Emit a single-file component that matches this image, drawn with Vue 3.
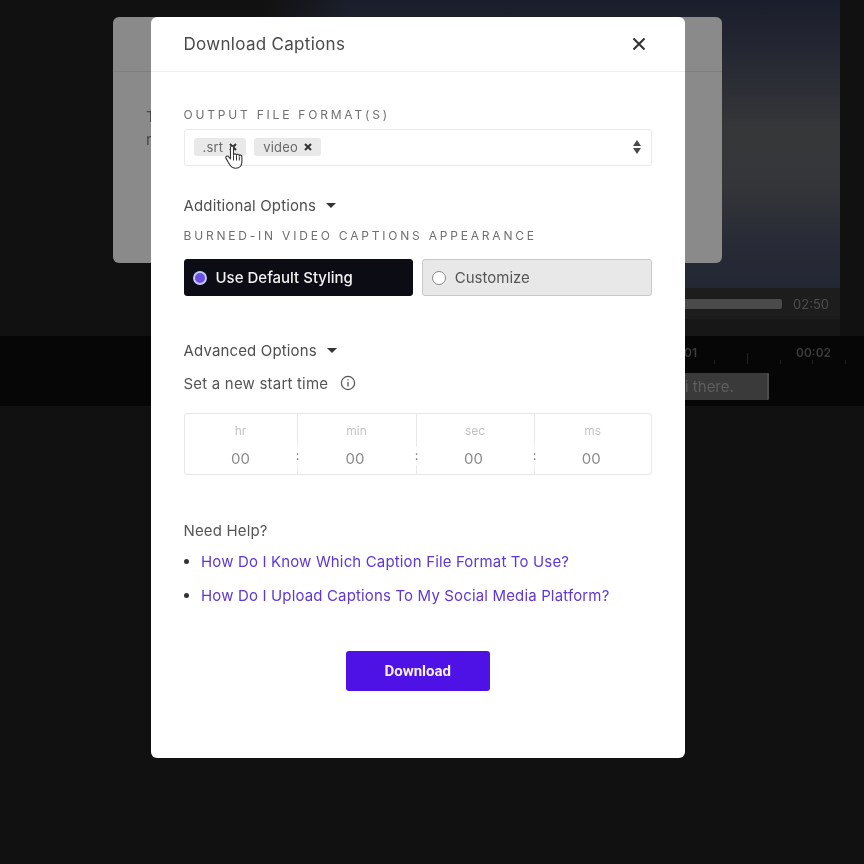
<script setup>
const formats = ['.srt', 'video']
const timeFields = [
  { label: 'hr', value: '00' },
  { label: 'min', value: '00' },
  { label: 'sec', value: '00' },
  { label: 'ms', value: '00' }
]
const helpLinks = [
  'How Do I Know Which Caption File Format To Use?',
  'How Do I Upload Captions To My Social Media Platform?'
]
const rulerTicks = [false, true, false, false, false]
</script>

<template>
  <div class="page">
    <div class="editor">
      <div class="video-row">
        <div class="video-area"></div>
      </div>
      <div class="player-row">
        <div class="progress"></div>
        <span class="duration">02:50</span>
      </div>
      <div class="timeline">
        <div class="ruler">
          <span class="tick-label first">01</span>
          <span class="tick-label second">00:02</span>
          <div class="ticks">
            <i v-for="(tall, i) in rulerTicks" :key="i" class="tick" :class="{ tall }"></i>
          </div>
        </div>
        <div class="caption-chip">i there.</div>
      </div>
    </div>

    <div class="back-modal">
      <div class="back-head"></div>
      <p class="back-text">T<br />r</p>
    </div>

    <section class="modal">
      <header class="modal-head">
        <h2>Download Captions</h2>
        <svg class="close" viewBox="0 0 14 14" width="14" height="14">
          <path d="M1.5 1.5l11 11M12.5 1.5l-11 11" stroke="#333" stroke-width="2.1" fill="none" />
        </svg>
      </header>

      <div class="modal-body">
        <label class="caps first-label">Output file format(s)</label>
        <div class="select">
          <span v-for="f in formats" :key="f" class="tag">
            {{ f }}
            <svg viewBox="0 0 8 8" width="8" height="8">
              <path d="M1 1l6 6M7 1l-6 6" stroke="#333" stroke-width="2" fill="none" />
            </svg>
          </span>
          <svg class="updown" viewBox="0 0 10 16" width="10" height="16">
            <path d="M5 1l4 6H1zM5 15l-4-6h8z" fill="#4a4a4a" />
          </svg>
          <svg class="cursor" viewBox="0 0 20 26" width="20" height="27">
            <path d="M6.5 3.2c0-2.3 3-2.3 3 0v7.3c.2-1.5 2.8-1.6 3 .2.3-1.3 2.6-1.2 2.8.5.4-1 2.5-.8 2.6.9v5.1c0 3.8-2.4 6.5-6 6.5-3.1 0-4.8-1.2-6.3-3.8l-3.6-6c-1-1.9 1.3-3.3 2.6-1.7l1.9 2.3z" fill="#fff" stroke="#333" stroke-width="1.1" stroke-linejoin="round" />
            <path d="M9.5 11v5M12.5 11v5M15.3 12v4" stroke="#333" stroke-width="1" fill="none" />
          </svg>
        </div>

        <div class="toggle first-toggle">Additional Options <i class="caret"></i></div>
        <label class="caps burn-label">Burned-in video captions appearance</label>
        <div class="style-row">
          <div class="style-btn active"><i class="radio on"></i>Use Default Styling</div>
          <div class="style-btn"><i class="radio"></i>Customize</div>
        </div>

        <div class="toggle second-toggle">Advanced Options <i class="caret"></i></div>
        <div class="start-time">
          Set a new start time
          <svg viewBox="0 0 16 16" width="16" height="16">
            <circle cx="8" cy="8" r="6.6" fill="none" stroke="#555" stroke-width="1.2" />
            <path d="M8 4.2v1.3M8 7v4.6" stroke="#555" stroke-width="1.3" fill="none" />
          </svg>
        </div>

        <div class="time-grid">
          <div v-for="(t, i) in timeFields" :key="t.label" class="time-cell">
            <span class="time-label">{{ t.label }}</span>
            <span class="time-value">{{ t.value }}</span>
            <span v-if="i < timeFields.length - 1" class="colon">:</span>
          </div>
        </div>

        <div class="help-title">Need Help?</div>
        <ul class="help-list">
          <li v-for="link in helpLinks" :key="link"><a>{{ link }}</a></li>
        </ul>

        <div class="actions">
          <button class="download">Download</button>
        </div>
      </div>
    </section>
  </div>
</template>

<style>
html, body {
  background: #111;
}
</style>

<style scoped>
.page {
  position: relative;
  width: 864px;
  height: 864px;
  overflow: hidden;
  background: #111;
  font-family: Inter, "Liberation Sans", sans-serif;
  filter: blur(0.4px);
}

.editor {
  display: flex;
  flex-direction: column;
}

.video-row {
  height: 288px;
  display: flex;
  justify-content: flex-end;
  padding-right: 24px;
}

.video-area {
  width: 580px;
  background:
    linear-gradient(to right, #111 0, rgba(17, 17, 17, 0) 90px),
    linear-gradient(#1a1d2b 0, #262833 20%, #363739 45%, #353639 62%, #282b36 85%, #232734 100%);
}

.player-row {
  height: 48px;
  box-sizing: border-box;
  margin-right: 24px;
  padding: 0 11px 16px 0;
  display: flex;
  justify-content: flex-end;
  align-items: center;
  gap: 11px;
  background:
    linear-gradient(to right, #111 300px, rgba(17, 17, 17, 0) 420px),
    linear-gradient(#1d1d1d 0, #1d1d1d 31px, #171717 31px);
}

.progress {
  width: 150px;
  height: 10px;
  border-radius: 2px;
  background: #4a4a4a;
}

.duration {
  font-size: 13px;
  color: #4d4d4d;
}

.timeline {
  height: 70px;
  background: #060606;
  display: flex;
  flex-direction: column;
  align-items: flex-end;
  padding-right: 95px;
}

.ruler {
  position: relative;
  align-self: stretch;
  height: 37px;
  font-size: 12px;
  font-weight: 600;
  color: #3c3c3c;
}

.tick-label {
  position: absolute;
  top: 9px;
}

.tick-label.first {
  left: 684px;
}

.tick-label.second {
  left: 796px;
}

.ticks {
  position: absolute;
  left: 714px;
  top: 16px;
  width: 132px;
  height: 12px;
  display: flex;
  justify-content: space-between;
  align-items: flex-end;
}

.tick {
  width: 1px;
  height: 4px;
  background: #222;
}

.tick.tall {
  height: 11px;
}

.caption-chip {
  width: 85px;
  height: 27px;
  box-sizing: border-box;
  background: #3a3a3a;
  border-right: 2px solid #4c4c4c;
  border-radius: 1px;
  color: #5e5e5e;
  font-size: 15px;
  line-height: 27px;
  text-indent: 1px;
}

.back-modal {
  position: absolute;
  left: 113px;
  top: 17px;
  width: 609px;
  height: 246px;
  border-radius: 6px;
  background: #8a8a8a;
}

.back-head {
  height: 54px;
  border-bottom: 1px solid #7f7f7f;
}

.back-text {
  margin: 33px 0 0 33px;
  font-size: 15px;
  line-height: 23px;
  color: #444;
}

.modal {
  position: absolute;
  left: 151px;
  top: 17px;
  width: 534px;
  height: 741px;
  border-radius: 6px;
  background: #fff;
}

.modal-head {
  height: 54px;
  display: flex;
  align-items: center;
  justify-content: space-between;
  padding: 0 39px 0 32.5px;
  border-bottom: 1px solid #eee;
}

.modal-head h2 {
  margin: 0;
  font-size: 17px;
  font-weight: 400;
  letter-spacing: 0.3px;
  color: #4a4a4a;
}

.modal-body {
  padding: 0 33px 0 32.5px;
}

.caps {
  display: block;
  font-size: 12px;
  line-height: 16px;
  letter-spacing: 2.8px;
  text-transform: uppercase;
  color: #707070;
}

.first-label {
  margin-top: 35px;
}

.select {
  position: relative;
  height: 37px;
  margin-top: 6px;
  display: flex;
  align-items: center;
  gap: 8px;
  padding-left: 9px;
  border: 1px solid #eaeaea;
  border-radius: 3px;
  box-sizing: border-box;
}

.tag {
  display: flex;
  align-items: center;
  gap: 6px;
  height: 18px;
  margin-top: -2px;
  padding: 0 9px;
  background: #e9e9e9;
  border-radius: 3px;
  font-size: 13px;
  letter-spacing: 0.2px;
  color: #6a6a6a;
}

.updown {
  position: absolute;
  right: 9px;
  top: 9px;
}

.cursor {
  position: absolute;
  left: 39px;
  top: 14px;
}

.toggle {
  display: flex;
  align-items: center;
  gap: 10px;
  font-size: 15px;
  line-height: 20px;
  letter-spacing: 0.15px;
  color: #4f4f4f;
}

.first-toggle {
  margin-top: 30px;
}

.second-toggle {
  margin-top: 45px;
}

.caret {
  width: 0;
  height: 0;
  margin-top: -1px;
  border-left: 5px solid transparent;
  border-right: 5px solid transparent;
  border-top: 5px solid #333;
}

.burn-label {
  margin-top: 12px;
}

.style-row {
  display: flex;
  gap: 9px;
  margin-top: 15px;
}

.style-btn {
  flex: 1;
  height: 37px;
  display: flex;
  align-items: center;
  gap: 9px;
  padding-left: 9px;
  box-sizing: border-box;
  border: 1px solid #c8c8c8;
  border-radius: 3px;
  background: #e8e8e8;
  font-size: 15px;
  color: #555;
}

.style-btn.active {
  padding-left: 8px;
  border-color: #0c0c14;
  background: #0c0c14;
  color: #f2f2f2;
  font-weight: 500;
}

.radio {
  width: 14px;
  height: 14px;
  box-sizing: border-box;
  border-radius: 50%;
  border: 1px solid #888;
  background: #fff;
}

.radio.on {
  border: 2.5px solid #c5c8fa;
  background: #6a4fe0;
}

.start-time {
  display: flex;
  align-items: center;
  gap: 12px;
  margin-top: 13px;
  font-size: 15px;
  line-height: 20px;
  letter-spacing: 0.2px;
  color: #555;
}

.start-time svg {
  margin-top: -3px;
}

.time-grid {
  display: grid;
  grid-template-columns: 113px 119px 118px 1fr;
  height: 62px;
  margin-top: 19px;
  box-sizing: border-box;
  border: 1px solid #e8e8e8;
  border-radius: 3px;
}

.time-cell {
  position: relative;
  display: flex;
  flex-direction: column;
  align-items: center;
  padding-top: 9px;
  box-sizing: border-box;
  border-right: 1px solid #e8e8e8;
}

.time-cell:last-child {
  border-right: 0;
}

.time-cell:not(:first-child) .time-value {
  margin-right: 3px;
}

.time-label {
  font-size: 12px;
  line-height: 16px;
  color: #c4c4c4;
}

.time-value {
  margin-top: 10px;
  font-size: 15px;
  line-height: 20px;
  color: #8a8a8a;
}

.colon {
  position: absolute;
  right: -3px;
  top: 33px;
  padding-bottom: 2px;
  background: #fff;
  font-size: 13px;
  line-height: 16px;
  color: #777;
}

.help-title {
  margin-top: 45.5px;
  font-size: 15px;
  line-height: 20px;
  letter-spacing: 0.15px;
  color: #555;
}

.help-list {
  margin: 11.5px 0 0;
  padding: 0 0 0 17.5px;
  font-size: 15px;
  line-height: 20px;
  letter-spacing: 0.15px;
  color: #333;
}

.help-list li + li {
  margin-top: 13.5px;
}

.help-list a {
  color: #5e37d6;
}

.actions {
  display: flex;
  justify-content: center;
  margin-top: 45.5px;
}

.download {
  width: 144px;
  height: 40px;
  border: 0;
  border-radius: 3px;
  background: #4f12e6;
  color: #f4f0fe;
  font-family: Roboto, Inter, sans-serif;
  font-size: 15px;
  font-weight: 700;
}
</style>
